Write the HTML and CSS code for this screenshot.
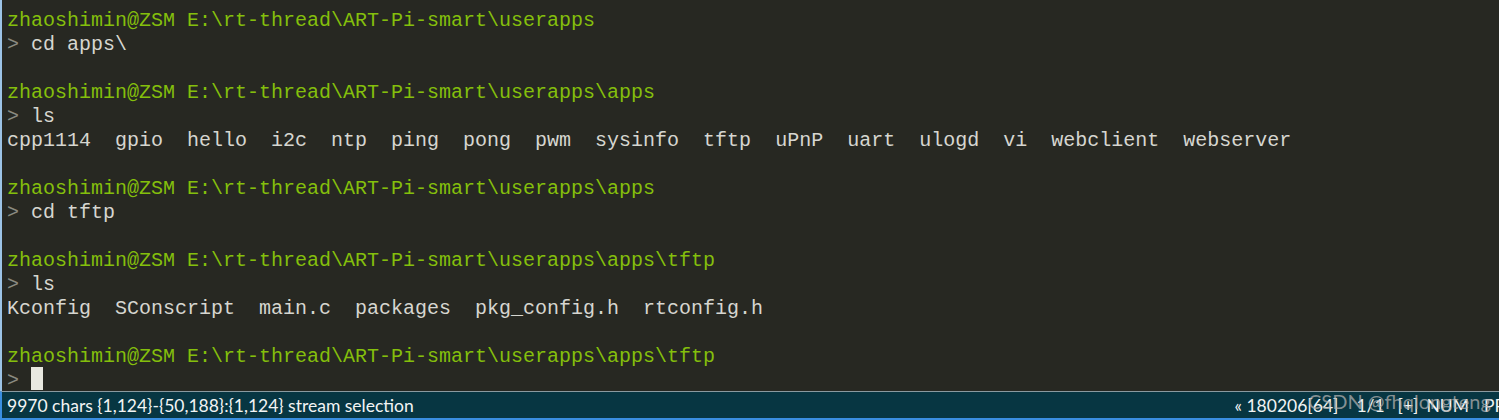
FILE: index.html
```html
<!DOCTYPE html>
<html>
<head>
<meta charset="utf-8">
<link rel="stylesheet" href="styles.css">
</head>
<body>
<div class="app">
  <div class="term">
    <div class="ln g">zhaoshimin@ZSM E:\rt-thread\ART-Pi-smart\userapps</div>
    <div class="ln"><span class="p">&gt;</span> cd apps\</div>
    <div class="ln"> </div>
    <div class="ln g">zhaoshimin@ZSM E:\rt-thread\ART-Pi-smart\userapps\apps</div>
    <div class="ln"><span class="p">&gt;</span> ls</div>
    <div class="ln">cpp1114  gpio  hello  i2c  ntp  ping  pong  pwm  sysinfo  tftp  uPnP  uart  ulogd  vi  webclient  webserver</div>
    <div class="ln"> </div>
    <div class="ln g">zhaoshimin@ZSM E:\rt-thread\ART-Pi-smart\userapps\apps</div>
    <div class="ln"><span class="p">&gt;</span> cd tftp</div>
    <div class="ln"> </div>
    <div class="ln g">zhaoshimin@ZSM E:\rt-thread\ART-Pi-smart\userapps\apps\tftp</div>
    <div class="ln"><span class="p">&gt;</span> ls</div>
    <div class="ln">Kconfig  SConscript  main.c  packages  pkg_config.h  rtconfig.h</div>
    <div class="ln"> </div>
    <div class="ln g">zhaoshimin@ZSM E:\rt-thread\ART-Pi-smart\userapps\apps\tftp</div>
    <div class="ln"><span class="p">&gt;</span> <span class="cursor"> </span></div>
  </div>
  <div class="status">
    <span class="sel">9970 chars {1,124}-{50,188}:{1,124} stream selection</span>
    <span class="right">
      <span class="seg s1">« 180206[64]</span>
      <span class="seg s2">1/1</span>
      <span class="seg s3">[+]</span>
      <span class="seg s4">NUM</span>
      <span class="seg">PP</span>
    </span>
    <span class="wm">CSDN @fhqlongteng</span>
  </div>
</div>
</body>
</html>
```
FILE: styles.css
```css
html, body {
  margin: 0;
  padding: 0;
  background: #272822;
  overflow: hidden;
}
.app {
  width: 1499px;
  height: 420px;
  display: flex;
  flex-direction: column;
}
.term {
  height: 391px;
  box-sizing: border-box;
  padding: 7px 0 0 5px;
  border-left: 2px solid #9cc3e6;
  background: #272822;
  font-family: "Liberation Mono", monospace;
  font-size: 20px;
  color: #d6d6d0;
  overflow: hidden;
}
.ln {
  height: 24px;
  box-sizing: border-box;
  padding-top: 2px;
  line-height: 24px;
  white-space: pre;
}
.g { color: #84bf0c; }
.p { color: #8a8a80; }
.cursor {
  display: inline-block;
  width: 12px;
  height: 23px;
  vertical-align: top;
  margin-top: -2px;
  background: #e8e8e0;
}
.status {
  position: relative;
  height: 29px;
  box-sizing: border-box;
  border-top: 1px solid #8a9aa0;
  border-bottom: 2px solid #3a8ee0;
  border-left: 2px solid #3a8ee0;
  background: #073642;
  color: #f2f4f4;
  font-family: Lato, sans-serif;
  font-size: 17.5px;
  display: flex;
  align-items: center;
  justify-content: space-between;
  padding-left: 5px;
  overflow: hidden;
  white-space: nowrap;
}
.right {
  display: flex;
  flex-shrink: 0;
  margin-right: -6px;
}
.s1 { margin-right: 18px; }
.s2 { margin-right: 13px; }
.s3 { margin-right: 8px; }
.s4 { margin-right: 15px; }
.wm {
  position: absolute;
  left: 1306px;
  top: -3px;
  font-family: Lato, sans-serif;
  font-size: 20px;
  color: rgba(175, 175, 175, 0.75);
}
```
